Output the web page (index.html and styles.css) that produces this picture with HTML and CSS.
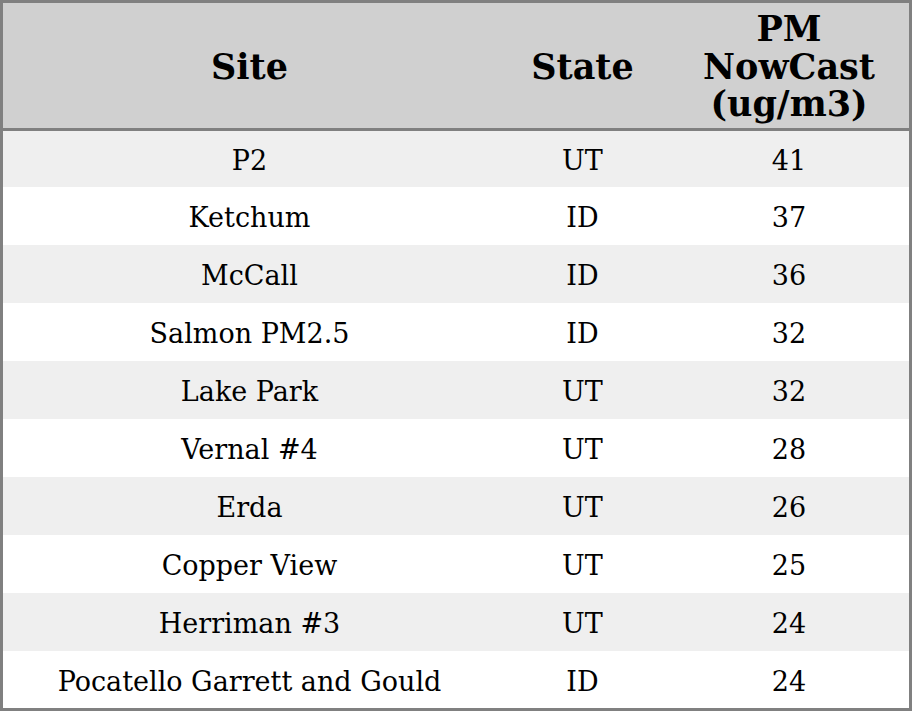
FILE: index.html
```html
<!DOCTYPE html>
<html>
<head>
<meta charset="utf-8">
<link rel="stylesheet" href="styles.css">
</head>
<body>
<table class="aq">
  <colgroup>
    <col class="c-site">
    <col class="c-state">
    <col class="c-pm">
  </colgroup>
  <thead>
    <tr class="head-row"><th>Site</th><th>State</th><th>PM<br>NowCast<br>(ug/m3)</th></tr>
  </thead>
  <tbody>
    <tr><td>P2</td><td>UT</td><td>41</td></tr>
    <tr><td>Ketchum</td><td>ID</td><td>37</td></tr>
    <tr><td>McCall</td><td>ID</td><td>36</td></tr>
    <tr><td>Salmon PM2.5</td><td>ID</td><td>32</td></tr>
    <tr><td>Lake Park</td><td>UT</td><td>32</td></tr>
    <tr><td>Vernal #4</td><td>UT</td><td>28</td></tr>
    <tr><td>Erda</td><td>UT</td><td>26</td></tr>
    <tr><td>Copper View</td><td>UT</td><td>25</td></tr>
    <tr><td>Herriman #3</td><td>UT</td><td>24</td></tr>
    <tr><td>Pocatello Garrett and Gould</td><td>ID</td><td>24</td></tr>
  </tbody>
</table>
</body>
</html>
```
FILE: styles.css
```css
html, body {
  margin: 0;
  padding: 0;
  background: #ffffff;
}
.aq {
  width: 912px;
  border: 3px solid #808080;
  border-collapse: separate;
  border-spacing: 0;
  table-layout: fixed;
  font-family: "DejaVu Serif", serif;
  color: #000;
}
.c-site { width: 493px; }
.c-state { width: 173px; }
.c-pm { width: 240px; }
.head-row { height: 128px; }
.aq th {
  background: #d0d0d0;
  font-size: 35px;
  font-weight: bold;
  line-height: 37.5px;
  padding: 2px 0 0 0;
  text-align: center;
  vertical-align: middle;
  border-bottom: 3px solid #808080;
}
.aq tbody tr { height: 58px; }
.aq tbody tr:first-child { height: 56px; }
.aq tbody tr:last-child { height: 57px; }
.aq td {
  font-size: 27px;
  line-height: 30px;
  padding: 4px 0 0 0;
  text-align: center;
  vertical-align: middle;
}
.aq tbody tr:nth-child(odd) td {
  background: #efefef;
}
```
